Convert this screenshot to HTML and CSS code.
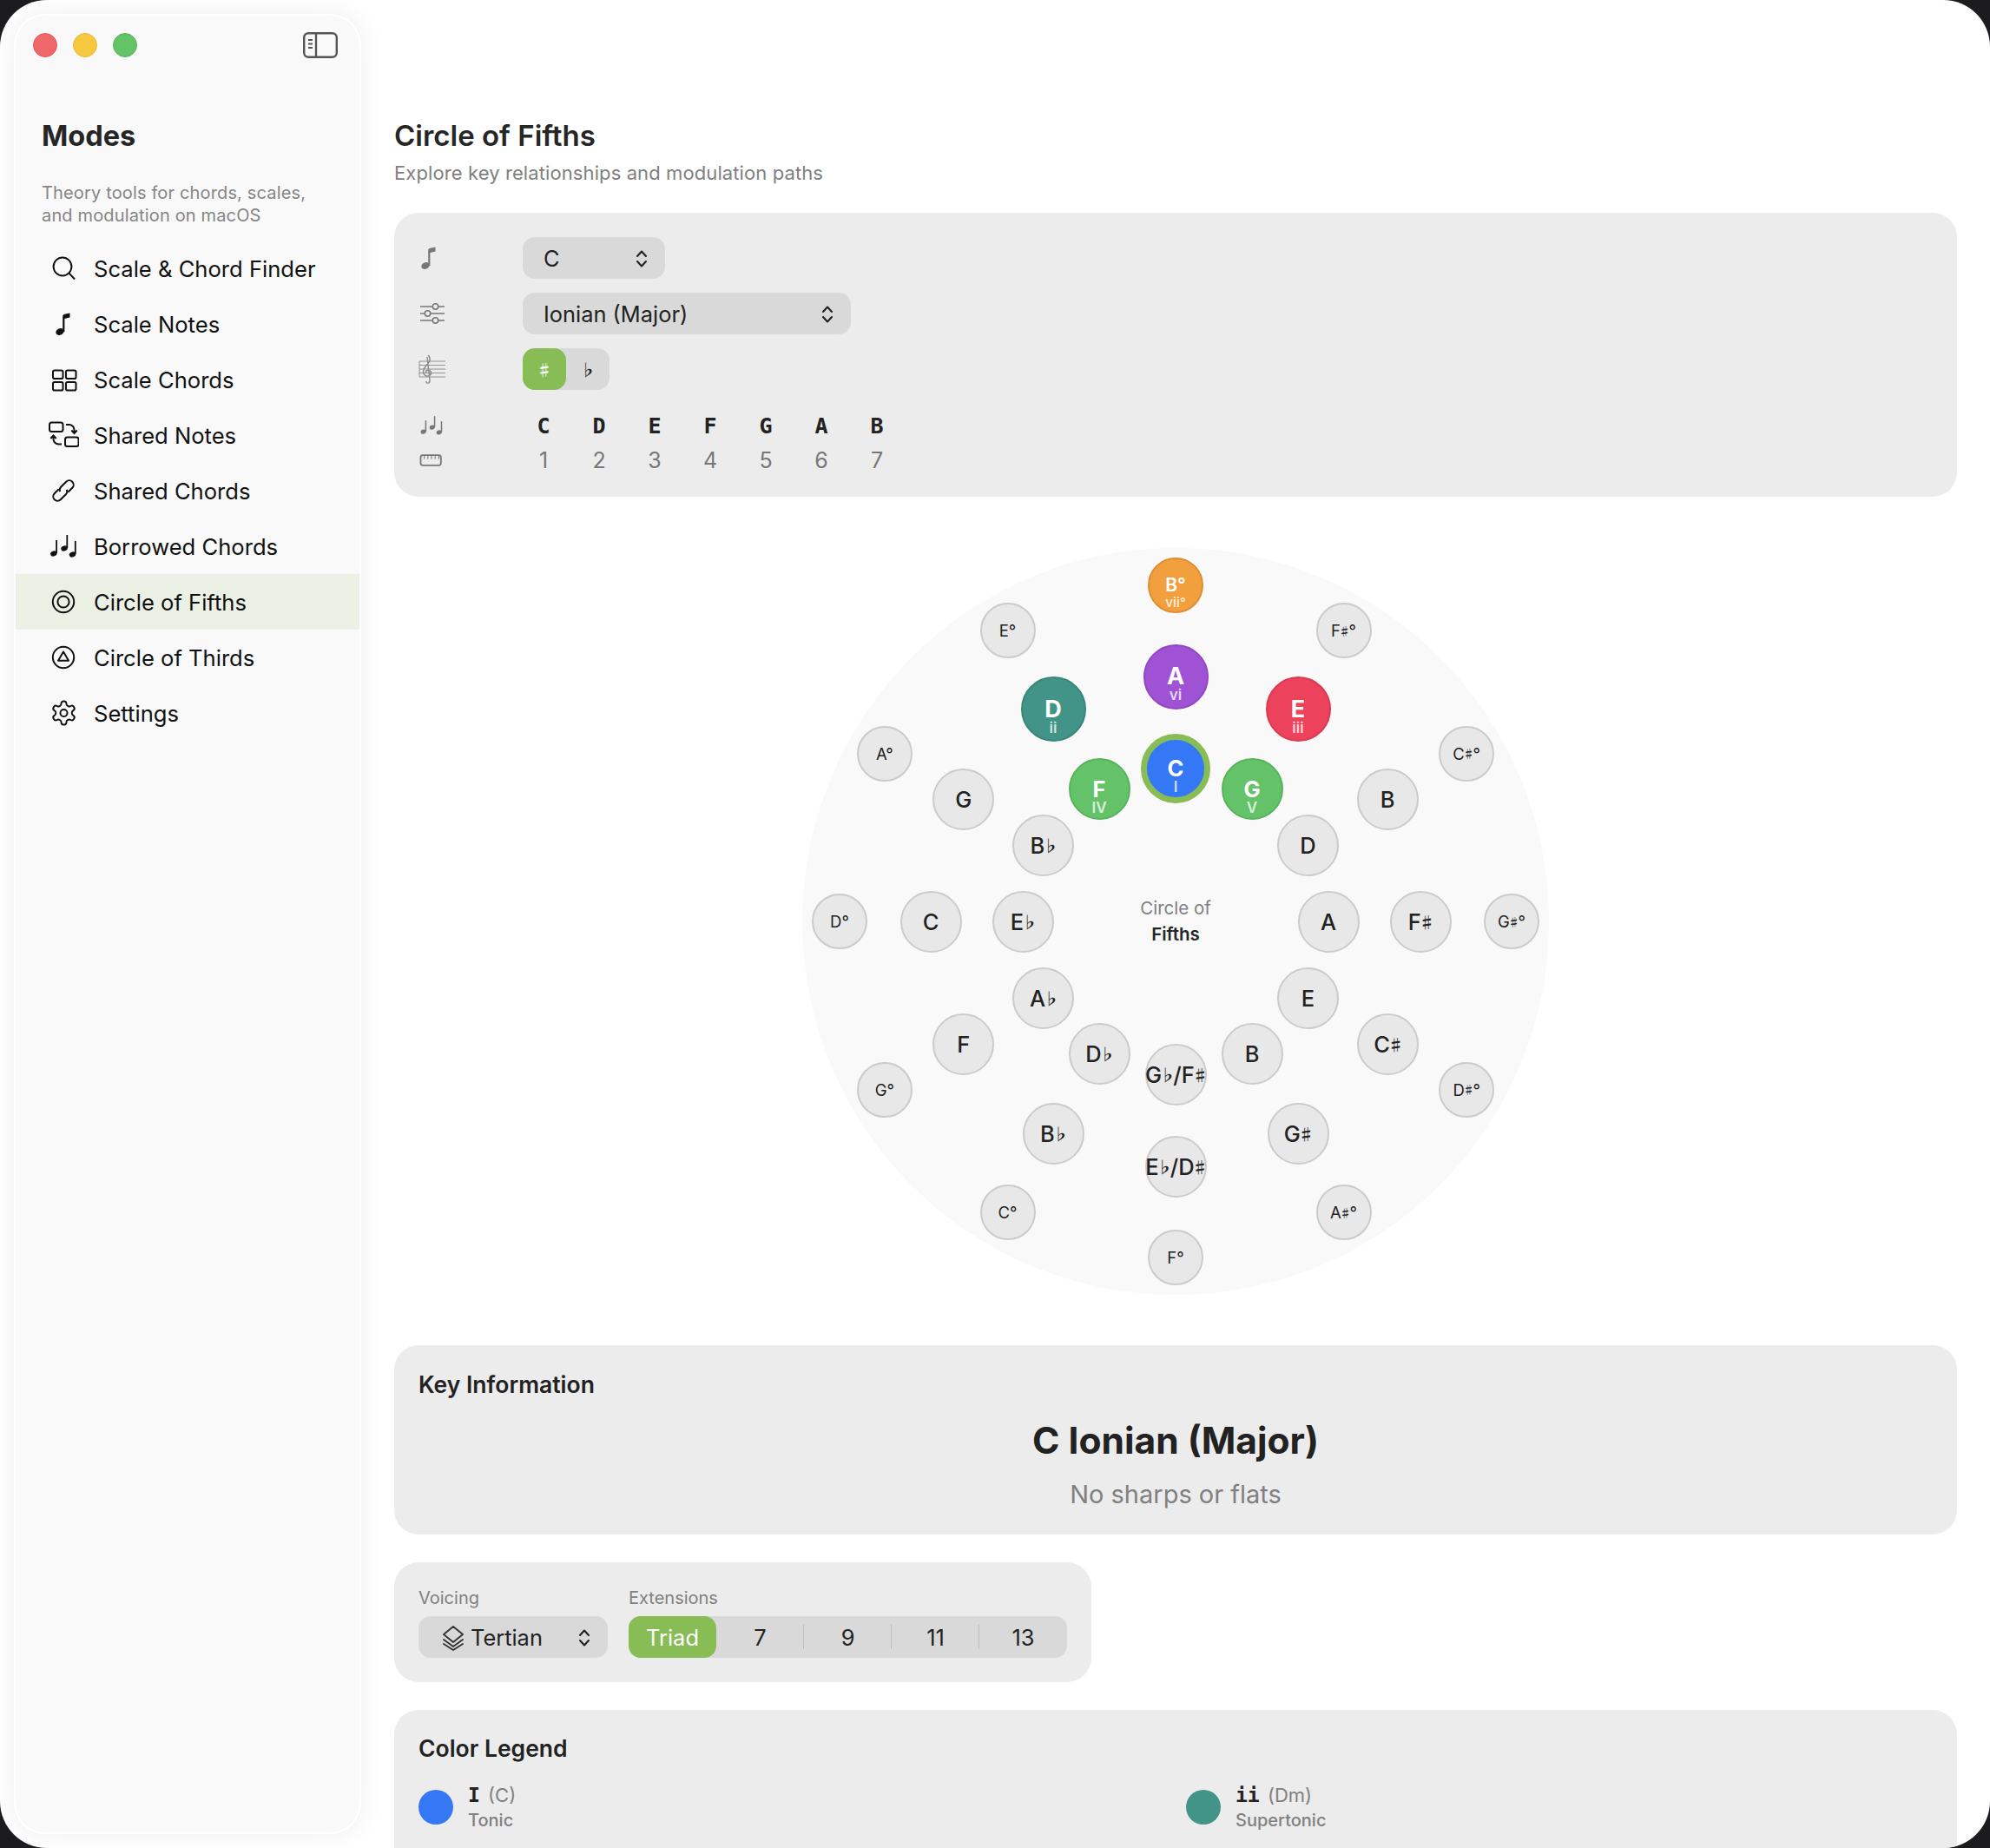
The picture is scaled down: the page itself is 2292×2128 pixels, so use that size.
FILE: index.html
```html
<!DOCTYPE html>
<html lang="en">
<head>
    <meta charset="UTF-8">
    <meta name="viewport" content="width=device-width, initial-scale=1.0">
    <title>Modes - Circle of Fifths</title>
    <link rel="stylesheet" href="styles.css">
</head>
<body>
    <svg class="sprites" width="0" height="0">
        <symbol id="i-note" viewBox="0 0 36 36">
            <ellipse cx="14" cy="27" rx="4.8" ry="3.8" transform="rotate(-20 14 27)" fill="currentColor"/>
            <path d="M17.2 27 L17.2 9.5 C17.2 8 18 7 19.6 6.7 L25.5 5.5 L25.5 10.5 L19.4 12 L19.4 27 Z" fill="currentColor"/>
        </symbol>
        <symbol id="i-notes" viewBox="0 0 36 36">
            <g fill="currentColor">
                <ellipse cx="6.8" cy="26.5" rx="3.8" ry="3" transform="rotate(-20 6.8 26.5)"/>
                <rect x="9.2" y="11" width="1.8" height="15"/>
                <ellipse cx="19" cy="20.5" rx="3.8" ry="3" transform="rotate(-20 19 20.5)"/>
                <rect x="21.4" y="5" width="1.8" height="15"/>
                <ellipse cx="28.5" cy="27.5" rx="3.8" ry="3" transform="rotate(-20 28.5 27.5)"/>
                <rect x="30.9" y="12" width="1.8" height="15"/>
            </g>
        </symbol>
        <symbol id="i-updown" viewBox="0 0 14 22">
            <path d="M2 8 L7 2.5 L12 8 M2 14 L7 19.5 L12 14" fill="none" stroke="currentColor" stroke-width="2.1" stroke-linecap="round" stroke-linejoin="round"/>
        </symbol>
    </svg>

    <div class="window">
        <aside class="sidebar">
            <div class="titlebar">
                <div class="lights">
                    <span class="light light-red"></span>
                    <span class="light light-yellow"></span>
                    <span class="light light-green"></span>
                </div>
                <svg class="toggle" viewBox="0 0 40 30">
                    <rect x="1.2" y="1.2" width="37.6" height="27.6" rx="5" fill="none" stroke="currentColor" stroke-width="2.4"/>
                    <path d="M15 1.5 V28.5" stroke="currentColor" stroke-width="2.4"/>
                    <path d="M6 9 H11 M6 13.5 H11 M6 18 H11" stroke="currentColor" stroke-width="1.8"/>
                </svg>
            </div>
            <h2 class="brand">Modes</h2>
            <p class="tagline">Theory tools for chords, scales,<br>and modulation on macOS</p>
            <nav class="nav">
                <a class="nav-item">
                    <svg class="nav-icon" viewBox="0 0 36 36"><circle cx="17" cy="16" r="10.4"/><path d="M24.6 23.6 L31 30.5"/></svg>
                    Scale &amp; Chord Finder
                </a>
                <a class="nav-item">
                    <svg class="nav-icon solid"><use href="#i-note"/></svg>
                    Scale Notes
                </a>
                <a class="nav-item">
                    <svg class="nav-icon" viewBox="0 0 36 36"><rect x="6" y="7.5" width="11.5" height="9.5" rx="1.8"/><rect x="21" y="7.5" width="11.5" height="9.5" rx="1.8"/><rect x="6" y="21" width="11.5" height="9.5" rx="1.8"/><rect x="21" y="21" width="11.5" height="9.5" rx="1.8"/></svg>
                    Scale Chords
                </a>
                <a class="nav-item">
                    <svg class="nav-icon" viewBox="0 0 36 36"><rect x="2" y="3.5" width="15.5" height="10.5" rx="2.5"/><rect x="20" y="20.5" width="15.5" height="10.5" rx="2.5"/><path d="M21 6 H24.5 A6 6 0 0 1 30.5 12 V15.5 M27.3 12.5 L30.5 16 L33.7 12.5"/><path d="M16 28.5 H12.5 A6 6 0 0 1 6.5 22.5 V19 M3.3 22 L6.5 18.5 L9.7 22"/></svg>
                    Shared Notes
                </a>
                <a class="nav-item">
                    <svg class="nav-icon" viewBox="0 0 36 36"><g transform="rotate(-45 18 18)"><path d="M15.5 13 H8.5 a5 5 0 0 0 0 10 H17 a5 5 0 0 0 4.5 -3"/><path d="M20.5 23 H27.5 a5 5 0 0 0 0 -10 H19 a5 5 0 0 0 -4.5 3"/></g></svg>
                    Shared Chords
                </a>
                <a class="nav-item">
                    <svg class="nav-icon solid"><use href="#i-notes"/></svg>
                    Borrowed Chords
                </a>
                <a class="nav-item active">
                    <svg class="nav-icon" viewBox="0 0 36 36"><circle cx="18" cy="18" r="12.2"/><circle cx="18" cy="18" r="6.6"/></svg>
                    Circle of Fifths
                </a>
                <a class="nav-item">
                    <svg class="nav-icon" viewBox="0 0 36 36"><circle cx="18" cy="18" r="12.2"/><path d="M18 11.5 L24 21.8 H12 Z" stroke-linejoin="round"/></svg>
                    Circle of Thirds
                </a>
                <a class="nav-item">
                    <svg class="nav-icon" viewBox="0 0 36 36"><g transform="translate(2.3 1.8) scale(1.35)" stroke-width="1.45"><path d="M12.22 2h-.44a2 2 0 0 0-2 2v.18a2 2 0 0 1-1 1.73l-.43.25a2 2 0 0 1-2 0l-.15-.08a2 2 0 0 0-2.73.73l-.22.38a2 2 0 0 0 .73 2.73l.15.1a2 2 0 0 1 1 1.72v.51a2 2 0 0 1-1 1.74l-.15.09a2 2 0 0 0-.73 2.73l.22.38a2 2 0 0 0 2.73.73l.15-.08a2 2 0 0 1 2 0l.43.25a2 2 0 0 1 1 1.73V20a2 2 0 0 0 2 2h.44a2 2 0 0 0 2-2v-.18a2 2 0 0 1 1-1.73l.43-.25a2 2 0 0 1 2 0l.15.08a2 2 0 0 0 2.73-.73l.22-.39a2 2 0 0 0-.73-2.73l-.15-.08a2 2 0 0 1-1-1.74v-.5a2 2 0 0 1 1-1.74l.15-.09a2 2 0 0 0 .73-2.73l-.22-.38a2 2 0 0 0-2.73-.73l-.15.08a2 2 0 0 1-2 0l-.43-.25a2 2 0 0 1-1-1.73V4a2 2 0 0 0-2-2z"/><circle cx="12" cy="12" r="3"/></g></svg>
                    Settings
                </a>
            </nav>
        </aside>

        <main class="content">
            <h1 class="page-title">Circle of Fifths</h1>
            <p class="page-sub">Explore key relationships and modulation paths</p>

            <section class="card controls">
                <div class="control-row">
                    <svg class="row-icon note-icon"><use href="#i-note"/></svg>
                    <div class="select select-key"><span>C</span><svg class="updown"><use href="#i-updown"/></svg></div>
                </div>
                <div class="control-row">
                    <svg class="row-icon" viewBox="0 0 36 36"><g fill="none" stroke="currentColor" stroke-width="1.5"><path d="M2 10 H16 M23 10 H30 M2 18 H7 M14 18 H30 M2 26 H16 M23 26 H30"/><circle cx="19.5" cy="10" r="3.2"/><circle cx="10.5" cy="18" r="3.2"/><circle cx="19.5" cy="26" r="3.2"/></g></svg>
                    <div class="select select-mode"><span>Ionian (Major)</span><svg class="updown"><use href="#i-updown"/></svg></div>
                </div>
                <div class="control-row">
                    <svg class="row-icon clef" viewBox="0 0 36 36"><g fill="none" stroke="currentColor"><path d="M1 9 H31 M1 13.5 H31 M1 18 H31 M1 22.5 H31 M1 27 H31 M1 9 V27" stroke-width="0.9"/><path d="M11 2 C15 6 13 10 9 14 C5 18 4 23 8 25.5 C12 27.5 16 24 14 20.5 C12 18 8 19 8.5 22.5 M10 4 L13 31 C13.5 35 8.5 35 9 32" stroke-width="1.4"/></g></svg>
                    <div class="accidentals"><span class="acc acc-on">♯</span><span class="acc">♭</span></div>
                </div>
                <div class="scale-rows">
                    <div class="scale-row scale-letters">
                        <svg class="small-icon"><use href="#i-notes"/></svg>
                        <span>C</span><span>D</span><span>E</span><span>F</span><span>G</span><span>A</span><span>B</span>
                    </div>
                    <div class="scale-row scale-degrees">
                        <svg class="small-icon" viewBox="0 0 36 36"><g fill="none" stroke="currentColor" stroke-width="2.2"><rect x="3" y="11" width="28" height="14" rx="3"/><path d="M8 12 V16.5 M13 12 V16.5 M18 12 V16.5 M23 12 V16.5 M28 12 V16.5" stroke-width="1.2"/></g></svg>
                        <span>1</span><span>2</span><span>3</span><span>4</span><span>5</span><span>6</span><span>7</span>
                    </div>
                </div>
            </section>

            <section class="wheel-wrap">
                <div class="wheel">
                    <div class="wheel-center"><span>Circle of</span><b>Fifths</b></div>

                    <div class="node outer hi orange" style="--i:0"><b>B°</b><small>vii°</small></div>
                    <div class="node outer" style="--i:1"><b>F<i>♯</i>°</b></div>
                    <div class="node outer" style="--i:2"><b>C<i>♯</i>°</b></div>
                    <div class="node outer" style="--i:3"><b>G<i>♯</i>°</b></div>
                    <div class="node outer" style="--i:4"><b>D<i>♯</i>°</b></div>
                    <div class="node outer" style="--i:5"><b>A<i>♯</i>°</b></div>
                    <div class="node outer" style="--i:6"><b>F°</b></div>
                    <div class="node outer" style="--i:7"><b>C°</b></div>
                    <div class="node outer" style="--i:8"><b>G°</b></div>
                    <div class="node outer" style="--i:9"><b>D°</b></div>
                    <div class="node outer" style="--i:10"><b>A°</b></div>
                    <div class="node outer" style="--i:11"><b>E°</b></div>

                    <div class="node mid hi big purple" style="--i:0"><b>A</b><small>vi</small></div>
                    <div class="node mid hi big red" style="--i:1"><b>E</b><small>iii</small></div>
                    <div class="node mid" style="--i:2"><b>B</b></div>
                    <div class="node mid" style="--i:3"><b>F<i>♯</i></b></div>
                    <div class="node mid" style="--i:4"><b>C<i>♯</i></b></div>
                    <div class="node mid" style="--i:5"><b>G<i>♯</i></b></div>
                    <div class="node mid" style="--i:6"><b>E<i>♭</i>/D<i>♯</i></b></div>
                    <div class="node mid" style="--i:7"><b>B<i>♭</i></b></div>
                    <div class="node mid" style="--i:8"><b>F</b></div>
                    <div class="node mid" style="--i:9"><b>C</b></div>
                    <div class="node mid" style="--i:10"><b>G</b></div>
                    <div class="node mid hi big teal" style="--i:11"><b>D</b><small>ii</small></div>

                    <div class="node inner hi tonic" style="--i:0"><b>C</b><small>I</small></div>
                    <div class="node inner hi green" style="--i:1"><b>G</b><small>V</small></div>
                    <div class="node inner" style="--i:2"><b>D</b></div>
                    <div class="node inner" style="--i:3"><b>A</b></div>
                    <div class="node inner" style="--i:4"><b>E</b></div>
                    <div class="node inner" style="--i:5"><b>B</b></div>
                    <div class="node inner" style="--i:6"><b>G<i>♭</i>/F<i>♯</i></b></div>
                    <div class="node inner" style="--i:7"><b>D<i>♭</i></b></div>
                    <div class="node inner" style="--i:8"><b>A<i>♭</i></b></div>
                    <div class="node inner" style="--i:9"><b>E<i>♭</i></b></div>
                    <div class="node inner" style="--i:10"><b>B<i>♭</i></b></div>
                    <div class="node inner hi green" style="--i:11"><b>F</b><small>IV</small></div>
                </div>
            </section>

            <section class="card key-info">
                <h3 class="card-title">Key Information</h3>
                <div class="key-name">C Ionian (Major)</div>
                <div class="key-sig">No sharps or flats</div>
            </section>

            <section class="card options">
                <div class="option">
                    <label>Voicing</label>
                    <div class="select select-voicing">
                        <svg class="stack" viewBox="0 0 28 30"><path d="M14 2 L25 11 L14 20 L3 11 Z M3 17 L14 25 L25 17 M3 22 L14 29 L25 22" fill="none" stroke="currentColor" stroke-width="1.9" stroke-linejoin="round" stroke-linecap="round"/></svg>
                        <span>Tertian</span>
                        <svg class="updown"><use href="#i-updown"/></svg>
                    </div>
                </div>
                <div class="option">
                    <label>Extensions</label>
                    <div class="segments">
                        <span class="seg seg-on">Triad</span>
                        <span class="seg">7</span>
                        <span class="seg">9</span>
                        <span class="seg">11</span>
                        <span class="seg">13</span>
                    </div>
                </div>
            </section>

            <section class="card legend">
                <h3 class="card-title">Color Legend</h3>
                <div class="legend-grid">
                    <div class="legend-item">
                        <span class="dot dot-blue"></span>
                        <div><div class="legend-top"><code>I</code> (C)</div><div class="legend-name">Tonic</div></div>
                    </div>
                    <div class="legend-item">
                        <span class="dot dot-teal"></span>
                        <div><div class="legend-top"><code>ii</code> (Dm)</div><div class="legend-name">Supertonic</div></div>
                    </div>
                </div>
            </section>
        </main>
    </div>
</body>
</html>
```

FILE: styles.css
```css
* {
    box-sizing: border-box;
}

html, body {
    margin: 0;
    height: 100%;
    background-color: #1c1c1e;
    overflow: hidden;
}

body {
    font-family: Inter, "Noto Sans", sans-serif;
    color: #222;
}

.sprites {
    position: absolute;
}

.window {
    display: flex;
    height: 100vh;
    background-color: #fff;
    border-radius: 54px;
    overflow: hidden;
}

/* sidebar */
.sidebar {
    flex: none;
    width: 400px;
    margin: 16px 0 16px 16px;
    padding-top: 19px;
    background-color: #f9f9f9;
    border: 2px solid #fff;
    border-radius: 36px;
    box-shadow: 0 0 30px rgba(0, 0, 0, 0.07);
    background-clip: padding-box;
}

.titlebar {
    display: flex;
    align-items: center;
    justify-content: space-between;
    padding: 0 25px 0 20px;
    height: 30px;
}

.lights {
    display: flex;
    gap: 18px;
}

.light {
    width: 28px;
    height: 28px;
    border-radius: 50%;
}

.light-red {
    background-color: #f0676a;
    border: 1px solid #e25558;
}

.light-yellow {
    background-color: #f5c83f;
    border: 1px solid #e6b935;
}

.light-green {
    background-color: #62c466;
    border: 1px solid #55b65a;
}

.toggle {
    width: 40px;
    height: 30px;
    color: #555;
}

.brand {
    margin: 69px 0 0 30px;
    font-size: 32.5px;
    line-height: 42px;
    font-weight: 700;
    color: #262626;
}

.tagline {
    margin: 31px 0 0 30px;
    font-size: 20px;
    line-height: 26px;
    letter-spacing: 0.15px;
    color: #858585;
}

.nav {
    display: flex;
    flex-direction: column;
    margin-top: 16px;
}

.nav-item {
    display: flex;
    align-items: center;
    gap: 17px;
    height: 64px;
    padding-left: 37px;
    font-size: 25.6px;
    color: #111;
}

.nav-item.active {
    background-color: #ebf0e5;
}

.nav-icon {
    flex: none;
    width: 36px;
    height: 36px;
    fill: none;
    stroke: #111;
    stroke-width: 2;
}

.nav-icon.solid {
    color: #111;
    stroke: none;
}

/* main column */
.content {
    flex: 1;
    min-width: 0;
    padding: 136px 38px 0;
}

.page-title {
    margin: 0;
    font-size: 33px;
    line-height: 40px;
    font-weight: 600;
    color: #262626;
}

.page-sub {
    margin: 9px 0 0;
    font-size: 22px;
    line-height: 28px;
    letter-spacing: 0.1px;
    color: #808080;
}

.card {
    background-color: #ececec;
    border-radius: 28px;
    padding: 28px;
}

.card-title {
    margin: 0;
    font-size: 26.5px;
    line-height: 32px;
    font-weight: 600;
    color: #222;
}

/* controls */
.controls {
    margin-top: 32px;
    height: 327px;
}

.control-row {
    display: flex;
    align-items: center;
    height: 48px;
    margin-bottom: 16px;
}

.row-icon {
    flex: none;
    width: 36px;
    height: 36px;
    margin-right: 84px;
    color: #777;
}

.note-icon {
    margin-left: -6px;
    margin-right: 90px;
}

.clef {
    color: #8a8a8a;
}

.select {
    display: flex;
    align-items: center;
    justify-content: space-between;
    height: 48px;
    padding: 1px 20px 0 24px;
    background-color: #d9d9d9;
    border-radius: 14px;
    font-size: 25.4px;
    color: #222;
}

.select-key {
    width: 164px;
}

.select-mode {
    width: 378px;
}

.updown {
    flex: none;
    width: 14px;
    height: 22px;
    color: #222;
}

.accidentals {
    display: flex;
    width: 100px;
    height: 48px;
    background-color: #d9d9d9;
    border-radius: 14px;
}

.acc {
    display: flex;
    align-items: center;
    justify-content: center;
    width: 50px;
    font-family: "Noto Sans CJK JP", sans-serif;
    font-size: 18px;
    font-weight: 700;
    border-radius: 14px;
}

.acc-on {
    background-color: #88bc55;
    color: #fff;
}

.scale-rows {
    margin-top: 21px;
}

.scale-row {
    display: flex;
    align-items: center;
    height: 40px;
    font-size: 25px;
}

.small-icon {
    flex: none;
    width: 30px;
    height: 30px;
    margin-right: 82px;
    color: #777;
}

.scale-row span {
    width: 64px;
    text-align: center;
}

.scale-letters {
    font-family: "DejaVu Sans Mono", monospace;
    font-weight: 700;
    color: #222;
}

.scale-degrees {
    color: #777;
}

/* the wheel */
.wheel-wrap {
    display: flex;
    justify-content: center;
    padding: 59px 0 58px;
}

.wheel {
    position: relative;
    width: 860px;
    height: 860px;
    border-radius: 50%;
    background-color: #f9f9f9;
}

.wheel-center {
    position: absolute;
    left: 50%;
    top: 50%;
    display: flex;
    flex-direction: column;
    align-items: center;
    gap: 8px;
    width: 160px;
    margin: -26px 0 0 -80px;
    font-size: 20.5px;
    line-height: 22px;
    color: #808080;
}

.wheel-center b {
    font-weight: 600;
    color: #262626;
}

.node {
    --a: calc(var(--i) * 30deg);
    position: absolute;
    left: calc(50% + var(--r) * sin(var(--a)) - var(--d) / 2);
    top: calc(50% - var(--r) * cos(var(--a)) - var(--d) / 2);
    display: flex;
    flex-direction: column;
    align-items: center;
    justify-content: center;
    width: var(--d);
    height: var(--d);
    border-radius: 50%;
    background-color: #e8e8e8;
    border: 2px solid #cbcbcb;
    color: #222;
    white-space: nowrap;
}

.node b {
    font-weight: 500;
}

/* sharps and flats are smaller and heavier than the letters; the CJK font has bold ones */
.node i {
    position: relative;
    top: -0.1em;
    margin: 0 -0.14em;
    font-family: "Noto Sans CJK JP", sans-serif;
    font-style: normal;
    font-weight: 700;
    font-size: 0.72em;
}

.outer {
    --r: 387px;
    --d: 64px;
    font-size: 18.5px;
}

.outer b {
    font-weight: 400;
}

.mid {
    --r: 282px;
    --d: 71px;
    font-size: 25.5px;
}

.inner {
    --r: 176px;
    --d: 71px;
    font-size: 25.5px;
}

.node small {
    font-size: 17px;
    line-height: 18px;
    font-weight: 600;
    opacity: 0.75;
}

.hi {
    padding-top: 18px;
    color: #fff;
}

.hi b {
    font-weight: 700;
    line-height: 24px;
}

.outer.hi {
    padding-top: 15px;
    font-size: 21px;
}

.outer.hi b {
    font-weight: 600;
}

.outer.hi small {
    font-size: 15px;
    line-height: 15px;
}

.big {
    --d: 75px;
    font-size: 27px;
}

.orange {
    background-color: #f2a03e;
    border-color: #de8e35;
}

.purple {
    background-color: #a052d4;
    border-color: #9148c4;
}

.red {
    background-color: #ec425c;
    border-color: #d93b53;
}

.teal {
    background-color: #429488;
    border-color: #39867b;
}

.green {
    background-color: #64c368;
    border-color: #57b25c;
}

.tonic {
    --d: 80px;
    background-color: #3478f6;
    border: 7px solid #88bc55;
}

/* key information */
.key-info {
    height: 218px;
    padding-top: 29px;
}

.key-name {
    margin-top: 21px;
    text-align: center;
    font-size: 42.5px;
    line-height: 56px;
    font-weight: 700;
    color: #222;
}

.key-sig {
    margin-top: 16px;
    text-align: center;
    font-size: 29px;
    line-height: 36px;
    color: #808080;
}

/* voicing + extensions */
.options {
    display: flex;
    gap: 24px;
    width: 803px;
    height: 138px;
    margin-top: 32px;
    padding-top: 29px;
}

.option label {
    display: block;
    height: 33px;
    font-size: 20px;
    line-height: 24px;
    color: #808080;
}

.select-voicing {
    width: 218px;
    padding: 1px 20px 0 26px;
}

.stack {
    flex: none;
    width: 28px;
    height: 30px;
    color: #333;
}

.select-voicing span {
    margin: 0 auto 0 6px;
}

.segments {
    display: flex;
    height: 48px;
    background-color: #d9d9d9;
    border-radius: 14px;
}

.seg {
    display: flex;
    align-items: center;
    justify-content: center;
    width: 101px;
    padding-top: 1px;
    font-size: 25.4px;
    background-image: linear-gradient(#bdbdbd, #bdbdbd);
    background-size: 1.5px 28px;
    background-position: right center;
    background-repeat: no-repeat;
}

.seg:nth-child(1), .seg:nth-child(5) {
    background-image: none;
}

.seg-on {
    background-color: #88bc55;
    color: #fff;
    border-radius: 14px;
}

/* legend */
.legend {
    height: 200px;
    margin-top: 32px;
    padding-top: 28px;
}

.legend-grid {
    display: grid;
    grid-template-columns: 1fr 1fr;
    column-gap: 24px;
    margin-top: 25px;
}

.legend-item {
    display: flex;
    align-items: center;
    gap: 17px;
}

.dot {
    flex: none;
    width: 40px;
    height: 40px;
    border-radius: 50%;
}

.dot-blue {
    background-color: #3478f6;
}

.dot-teal {
    background-color: #429488;
}

.legend-top {
    font-size: 22px;
    line-height: 26px;
    color: #808080;
}

.legend-top code {
    margin-right: 3px;
    font-family: "DejaVu Sans Mono", monospace;
    font-size: 23px;
    font-weight: 700;
    color: #222;
}

.legend-name {
    margin-top: 4px;
    font-size: 20px;
    line-height: 24px;
    font-weight: 500;
    color: #808080;
}
```
